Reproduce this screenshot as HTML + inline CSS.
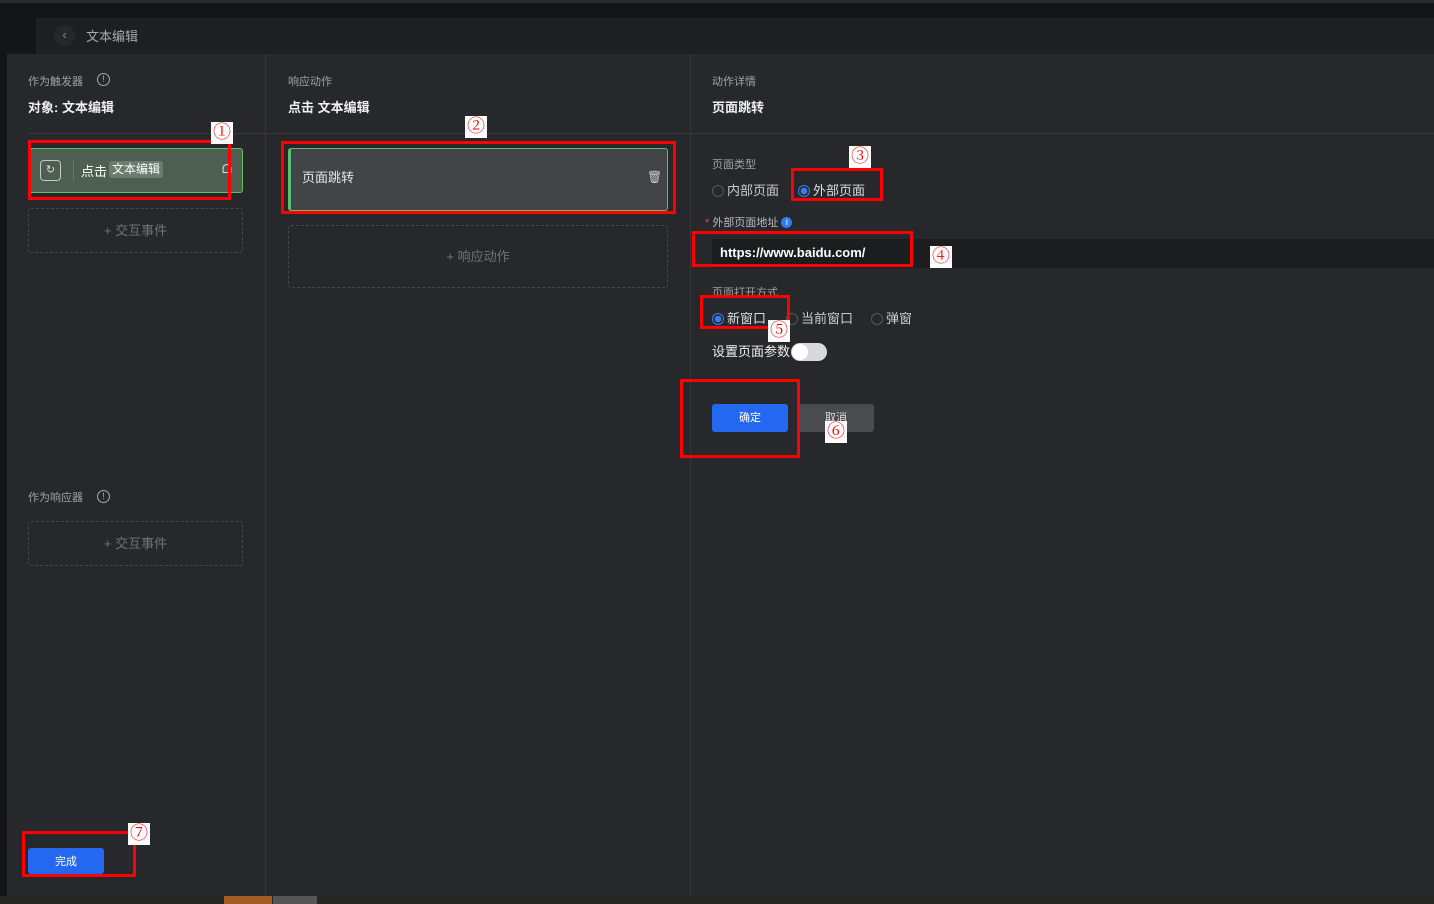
<!DOCTYPE html>
<html><head><meta charset="utf-8"><style>
*{margin:0;padding:0;box-sizing:border-box}
body{width:1434px;height:904px;background:#141517;position:relative;overflow:hidden;font-family:"Liberation Sans","Noto Sans CJK SC",sans-serif;color:#e6e6e6}
.a{position:absolute}
.t{font-size:12px;color:#a0a2a6}
.h{font-size:13px;color:#f0f0f0;font-weight:bold}
.red{position:absolute;border:3px solid #f00}
.num{position:absolute;background:#fff;color:#f00;font-size:18px;line-height:20px;width:22px;height:22px;text-align:center;font-family:"Liberation Serif","Noto Serif CJK SC",serif}
.dash{position:absolute;border:1px dashed #45474b;border-radius:3px;color:#707276;font-size:13px;text-align:center}
.radio{display:inline-block;width:12px;height:12px;border-radius:50%;border:1px solid #55575b;vertical-align:-2px;margin-right:3px}
.radio.on{border-color:#3a7bf0;background:radial-gradient(#3a7bf0 0 3px,transparent 3.5px)}
</style></head><body>
<div class="a" style="left:0;top:0;width:1434px;height:3px;background:#2a2b2d"></div>
<div class="a" style="left:36px;top:18px;width:1398px;height:36px;background:#1e1f21"></div>
<div class="a" style="left:54px;top:25px;width:21px;height:21px;border-radius:50%;background:#26272a;color:#888;font-size:13px;text-align:center;line-height:20px">‹</div>
<div class="a" style="left:86px;top:26px;font-size:13px;color:#a8a8aa">文本编辑</div>
<div class="a" style="left:7px;top:54px;width:1427px;height:842px;background:#27282b"></div>
<div class="a" style="left:265px;top:54px;width:1px;height:842px;background:#36373a"></div>
<div class="a" style="left:690px;top:54px;width:1px;height:842px;background:#36373a"></div>
<div class="a" style="left:28px;top:133px;width:1406px;height:1px;background:#36373a"></div>

<div class="a t" style="left:28px;top:73px;font-size:11px">作为触发器</div>
<div class="a" style="left:97px;top:73px;width:13px;height:13px;border:1px solid #aaa;border-radius:50%;font-size:9px;color:#aaa;text-align:center;line-height:11px">!</div>
<div class="a h" style="left:28px;top:97px">对象: 文本编辑</div>
<div class="a t" style="left:288px;top:73px;font-size:11px">响应动作</div>
<div class="a h" style="left:288px;top:97px">点击 文本编辑</div>
<div class="a t" style="left:712px;top:73px;font-size:11px">动作详情</div>
<div class="a h" style="left:712px;top:97px">页面跳转</div>

<div class="a" style="left:28px;top:148px;width:215px;height:45px;background:#4d5f51;border:1px solid #5fbf6a;border-radius:3px"></div>
<div class="a" style="left:40px;top:160px;width:21px;height:21px;border:1px solid #c8c8c8;border-radius:4px;font-size:11px;text-align:center;line-height:19px;color:#ddd">↻</div>
<div class="a" style="left:73px;top:160px;width:1px;height:20px;background:#6a7a6d"></div>
<div class="a" style="left:81px;top:161px;font-size:13px;color:#fff">点击</div>
<div class="a" style="left:109px;top:161px;padding:0 3px;background:#6b7b6e;border-radius:3px;font-size:12px;color:#fff;line-height:17px">文本编辑</div>
<div class="a" style="left:222px;top:162px;font-size:12px;color:#ddd">ᗝ</div>
<div class="dash" style="left:28px;top:208px;width:215px;height:45px;line-height:43px">+ 交互事件</div>

<div class="a" style="left:288px;top:148px;width:380px;height:63px;background:#434447;border:1px solid #5fbf6a;border-radius:3px;border-left:3px solid #5fbf6a"></div>
<div class="a" style="left:302px;top:167px;font-size:13px;color:#e6e6e6">页面跳转</div>
<div class="a" style="left:647px;top:170px;font-size:12px;color:#ccc">🗑</div>
<div class="dash" style="left:288px;top:225px;width:380px;height:63px;line-height:61px">+ 响应动作</div>

<div class="a t" style="left:28px;top:489px;font-size:11px">作为响应器</div>
<div class="a" style="left:97px;top:490px;width:13px;height:13px;border:1px solid #aaa;border-radius:50%;font-size:9px;color:#aaa;text-align:center;line-height:11px">!</div>
<div class="dash" style="left:28px;top:521px;width:215px;height:45px;line-height:43px">+ 交互事件</div>

<div class="a" style="left:28px;top:848px;width:76px;height:26px;background:#2468f2;border-radius:3px;color:#fff;font-size:11px;text-align:center;line-height:28px">完成</div>

<div class="a t" style="left:712px;top:156px;font-size:11px">页面类型</div>
<div class="a" style="left:712px;top:180px;font-size:13px;color:#ccc"><span class="radio"></span>内部页面</div>
<div class="a" style="left:798px;top:180px;font-size:13px;color:#ddd"><span class="radio on"></span>外部页面</div>
<div class="a" style="left:705px;top:214px;font-size:11px;color:#bbb"><span style="color:#e05050">*</span> 外部页面地址 <span style="display:inline-block;width:11px;height:11px;border-radius:50%;background:#2f7cf6;color:#fff;font-size:9px;text-align:center;line-height:11px;vertical-align:1px">i</span></div>
<div class="a" style="left:712px;top:239px;width:722px;height:29px;background:#1c1d1f"></div>
<div class="a" style="left:720px;top:245px;font-size:13px;color:#fff;font-weight:bold">https://www.baidu.com/</div>
<div class="a t" style="left:712px;top:284px;font-size:11px">页面打开方式</div>
<div class="a" style="left:712px;top:308px;font-size:13px;color:#ddd"><span class="radio on"></span>新窗口</div>
<div class="a" style="left:786px;top:308px;font-size:13px;color:#ccc"><span class="radio"></span>当前窗口</div>
<div class="a" style="left:871px;top:308px;font-size:13px;color:#ccc"><span class="radio"></span>弹窗</div>
<div class="a" style="left:712px;top:341px;font-size:13px;color:#eee">设置页面参数</div>
<div class="a" style="left:791px;top:343px;width:36px;height:18px;border-radius:9px;background:#d8d9dc"></div>
<div class="a" style="left:792px;top:344px;width:16px;height:16px;border-radius:50%;background:#fff"></div>
<div class="a" style="left:712px;top:404px;width:76px;height:28px;background:#2468f2;border-radius:3px;color:#fff;font-size:11px;text-align:center;line-height:29px">确定</div>
<div class="a" style="left:798px;top:404px;width:76px;height:28px;background:#4a4b4f;border-radius:3px;color:#ddd;font-size:11px;text-align:center;line-height:29px">取消</div>

<div class="a" style="left:0;top:896px;width:1434px;height:8px;background:#262624"></div>
<div class="a" style="left:224px;top:896px;width:48px;height:8px;background:#a45e25"></div>
<div class="a" style="left:273px;top:896px;width:44px;height:8px;background:#555"></div>

<div class="red" style="left:28px;top:140px;width:203px;height:60px"></div>
<div class="num" style="left:211px;top:122px">①</div>
<div class="red" style="left:281px;top:141px;width:395px;height:73px"></div>
<div class="num" style="left:465px;top:116px">②</div>
<div class="red" style="left:791px;top:168px;width:92px;height:33px"></div>
<div class="num" style="left:849px;top:146px">③</div>
<div class="red" style="left:692px;top:231px;width:221px;height:36px"></div>
<div class="num" style="left:930px;top:246px">④</div>
<div class="red" style="left:700px;top:295px;width:90px;height:34px"></div>
<div class="num" style="left:768px;top:320px">⑤</div>
<div class="red" style="left:680px;top:379px;width:120px;height:79px"></div>
<div class="num" style="left:825px;top:421px">⑥</div>
<div class="red" style="left:22px;top:831px;width:114px;height:46px"></div>
<div class="num" style="left:128px;top:823px">⑦</div>
</body></html>
